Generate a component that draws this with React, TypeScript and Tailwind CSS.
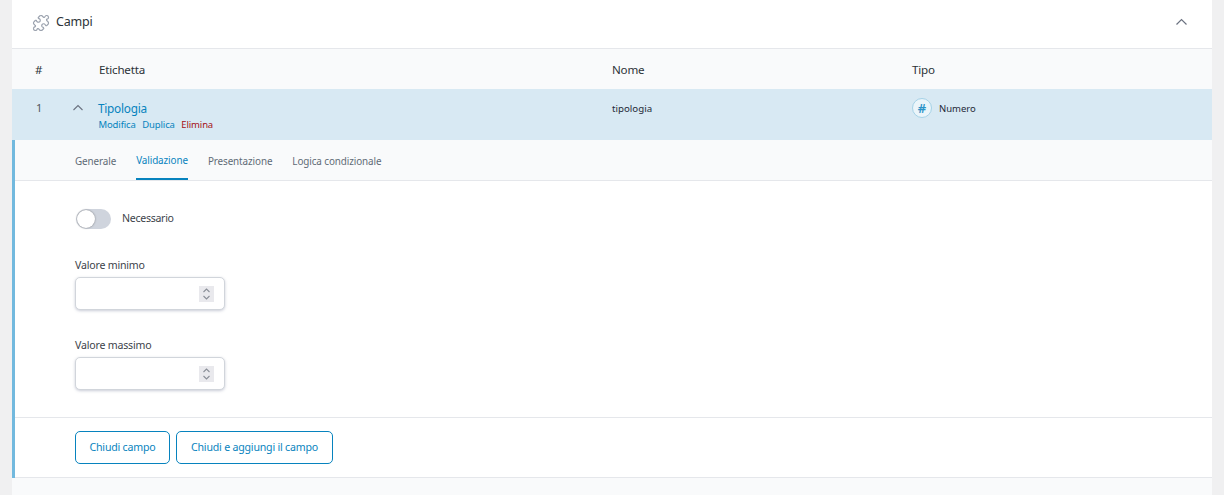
import { Puzzle } from "lucide-react";

export default function App() {
  const font = { fontFamily: '"Noto Sans", sans-serif' };
  const Spin = () => (
    <div className="w-[15px] h-4 bg-[#e9e9ed] flex items-center justify-center">
      <svg width="11" height="14" viewBox="0 0 11 14" fill="none" stroke="#8a8f98" strokeWidth="1.1">
        <path d="M2.5 5L5.5 2L8.5 5" />
        <path d="M2.5 9L5.5 12L8.5 9" />
      </svg>
    </div>
  );
  const NumField = ({ label }: { label: string }) => (
    <div className="flex flex-col">
      <div className="h-[20px] flex items-center pt-[2px] text-[10.6px] text-[#3c434a] tracking-[-0.2px]">{label}</div>
      <div className="mt-[2px] w-[150px] h-[33px] bg-white border border-[#d1d5db] rounded-[5px] shadow-[0_1px_3px_rgba(100,110,140,0.35)] flex items-center justify-end pr-[10px]">
        <Spin />
      </div>
    </div>
  );
  return (
    <div className="w-[1224px] h-[495px] overflow-hidden bg-[#f0f0f1] flex text-[#2c3338]" style={font}>
      <div className="ml-3 w-[1200px] h-full bg-white flex flex-col">
        <div className="h-[48px] shrink-0 flex items-center justify-between pl-5 pr-[23px]">
          <div className="flex items-center gap-[6px] -mt-[3px]">
            <Puzzle size={18} color="#9ca3af" strokeWidth={1.6} strokeDasharray="2 0.7" />
            <span className="text-[12.5px] text-[#2c3338] tracking-[-0.2px]">Campi</span>
          </div>
          <svg className="-mt-[4px]" width="14" height="14" viewBox="0 0 14 14" fill="none" stroke="#6b7280" strokeWidth="1.2">
            <path d="M1.500 9.500L6.500 4.500L11.500 9.500" />
          </svg>
        </div>
        <div className="h-[41px] shrink-0 bg-[#f9fafb] border-t border-[#e5e7eb] flex items-center text-[11.6px] tracking-[-0.2px] text-[#2c3338] pt-[2px]">
          <div className="w-[87px] pl-[23px]">#</div>
          <div className="w-[513px]">Etichetta</div>
          <div className="w-[300px]">Nome</div>
          <div>Tipo</div>
        </div>
        <div className="h-[51px] shrink-0 bg-[#d8e9f3] flex">
          <div className="w-[59px] pl-[24px] pt-[11px] text-[11px] text-[#50575e]">1</div>
          <div className="w-[27px] pt-[14px] pl-[1px]">
            <svg width="12" height="10" viewBox="0 0 12 10" fill="none" stroke="#6b7280" strokeWidth="1.1">
              <path d="M1.500 7L6 2.500L10.500 7" />
            </svg>
          </div>
          <div className="w-[514px] pt-[9px] flex flex-col">
            <span className="text-[11.8px] leading-[20px] text-[#0783be] tracking-[-0.25px]">Tipologia</span>
            <div className="flex gap-[6.5px] text-[9.5px] leading-[14px] tracking-[-0.13px] pl-[0.5px]">
              <span className="text-[#0783be]">Modifica</span>
              <span className="text-[#0783be]">Duplica</span>
              <span className="text-[#a50f15]">Elimina</span>
            </div>
          </div>
          <div className="w-[300px] pt-[12px] text-[9.7px] leading-[16px] text-[#1f2937]">tipologia</div>
          <div className="flex items-start pt-[9px] gap-[7px]">
            <div className="w-5 h-5 rounded-full bg-[#ebf5fa] border border-[#a5d2e7] flex items-center justify-center">
              <span className="text-[13px] leading-none font-semibold text-[#2b93c8]">#</span>
            </div>
            <span className="text-[9.5px] leading-[21px] text-[#1f2937]">Numero</span>
          </div>
        </div>
        <div className="flex-1 min-h-0 flex flex-col bg-[#f9fafb]">
          <div className="h-[338px] shrink-0 border-l-[3px] border-[#72b9de] flex flex-col bg-white">
            <div className="h-[41px] shrink-0 bg-[#f9fafb] border-b border-[#e5e7eb] flex pl-[60px] gap-[20px] text-[9.9px] tracking-[-0.1px] text-[#5f6b76]">
              <div className="h-[40px] flex items-center pt-[2px]">Generale</div>
              <div className="h-[40px] flex items-center pt-[2px] text-[#0783be] border-b-2 border-[#0783be]">Validazione</div>
              <div className="h-[40px] flex items-center pt-[2px]">Presentazione</div>
              <div className="h-[40px] flex items-center pt-[2px]">Logica condizionale</div>
            </div>
            <div className="h-[237px] shrink-0 pl-[60px] pt-[28px] flex flex-col border-b border-[#e5e7eb]">
              <div className="flex items-center gap-[11px] h-[20px] ml-[1px]">
                <div className="w-[35px] h-[20px] rounded-full bg-[#cfd4dd] relative">
                  <div className="absolute left-[1px] top-[1px] w-[18px] h-[18px] rounded-full bg-white shadow-[0_0_2px_rgba(0,0,0,0.45)]" />
                </div>
                <span className="text-[10.6px] text-[#3c434a] tracking-[-0.3px]">Necessario</span>
              </div>
              <div className="mt-[26px]"><NumField label="Valore minimo" /></div>
              <div className="mt-[25px]"><NumField label="Valore massimo" /></div>
            </div>
            <div className="h-[60px] shrink-0 pl-[60px] pt-[13px] flex gap-[6px] border-b border-[#e5e7eb] text-[10.6px] tracking-[-0.2px] text-[#0783be]">
              <button className="w-[95px] h-[33px] border border-[#0783be] rounded-[5px] bg-white">Chiudi campo</button>
              <button className="w-[157px] h-[33px] border border-[#0783be] rounded-[5px] bg-white">Chiudi e aggiungi il campo</button>
            </div>
          </div>
        </div>
      </div>
    </div>
  );
}
